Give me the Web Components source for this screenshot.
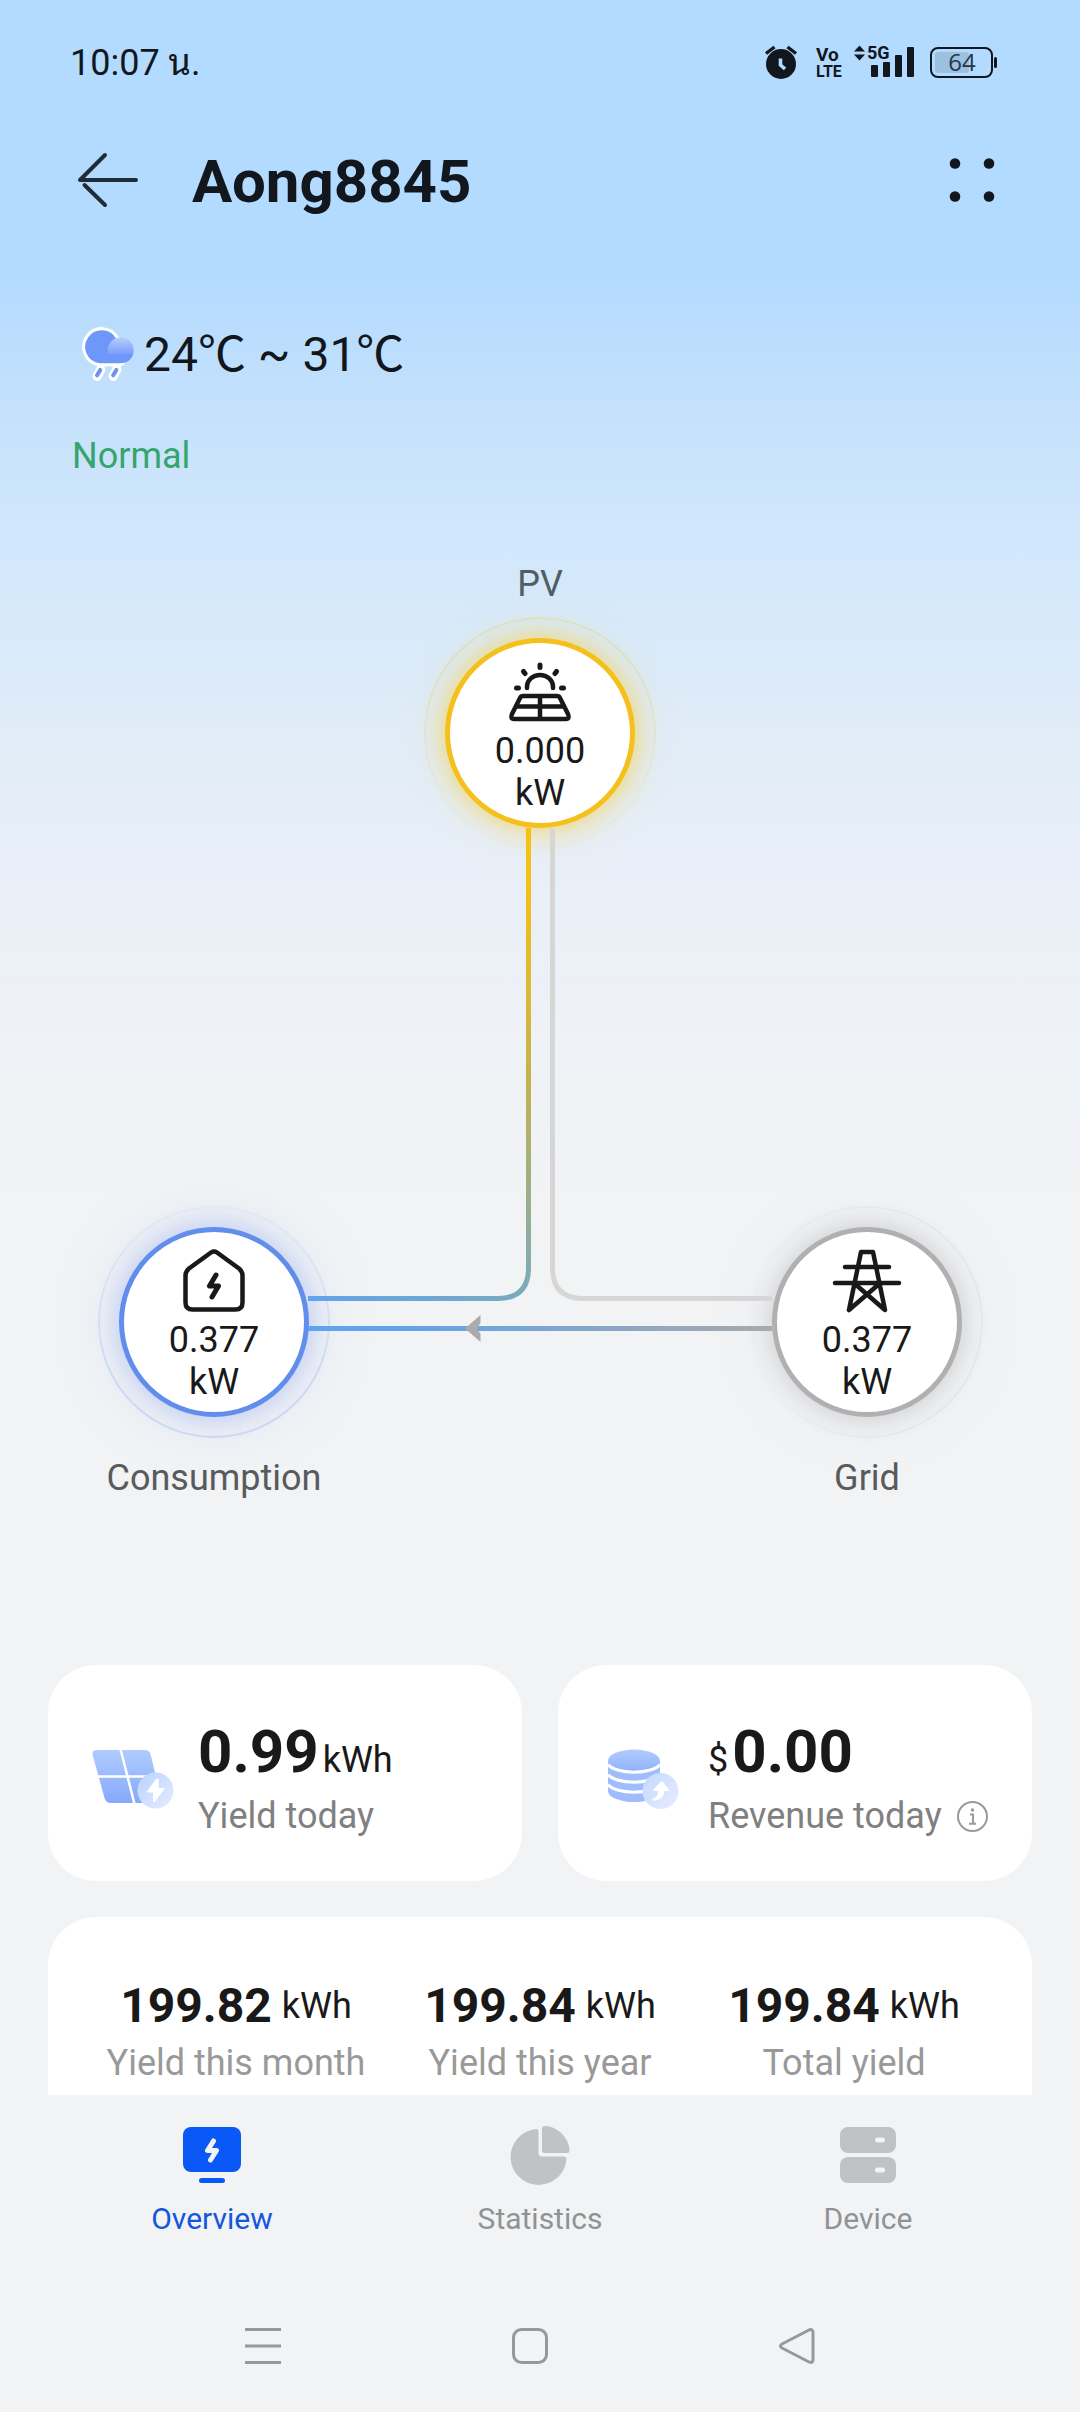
<!DOCTYPE html>
<html lang="en">
<head>
<meta charset="utf-8">
<meta name="viewport" content="width=device-width, initial-scale=1">
<title>Aong8845</title>
<style>
  body { margin: 0; background: #f1f3f5; font-family: Roboto, "Noto Sans", "Noto Sans Thai", sans-serif; color: #191919; }
</style>
</head>
<body>
<plant-app></plant-app>

<script>
const define = (name, html) => {
  const template = document.createElement('template');
  template.innerHTML = html;
  customElements.define(name, class extends HTMLElement {
    constructor() {
      super();
      this.attachShadow({ mode: 'open' }).append(template.content.cloneNode(true));
    }
  });
};

define('status-bar', `
<style>
  :host { display: flex; justify-content: space-between; align-items: center; height: 42px; padding: 42px 82px 0 70px; color: #11171d; }
  time { font-family: Roboto, "Noto Sans Thai Looped", "Noto Looped Thai", Loma, Garuda, Waree, "Noto Sans", sans-serif; font-size: 36px; line-height: 42px; }
  svg { display: block; }
</style>
<time lang="th">10:07 น.</time>
<svg width="234" height="42" viewBox="764 42 234 42" role="img" aria-label="Alarm, VoLTE, 5G signal, battery">
  <g fill="#11171d">
    <circle cx="781" cy="64" r="15"/>
    <path d="M766 53.500l8.500-6.500M796 53.500l-8.500-6.500" stroke="#11171d" stroke-width="3.400" fill="none"/>
    <path d="M780.500 58.500v6.500l4.500 4" fill="none" stroke="#b3daff" stroke-width="3.600"/>
    <g font-family="Roboto, sans-serif" font-weight="700">
      <text x="816" y="61" font-size="19">Vo</text>
      <text x="816" y="77" font-size="16">LTE</text>
      <text x="867" y="59" font-size="18">5G</text>
    </g>
    <path d="M854 51.500l5.500-6 5.500 6zM854 54.500h11l-5.500 6z"/>
    <rect x="871" y="65" width="7" height="12" rx="1"/>
    <rect x="883" y="62" width="7" height="15" rx="1"/>
    <rect x="895" y="55" width="7" height="22" rx="1"/>
    <rect x="907" y="47" width="7" height="30" rx="1"/>
    <rect x="994" y="57" width="3" height="11" rx="1.500"/>
  </g>
  <rect x="935" y="52" width="34" height="21" rx="3" fill="#9cc0e0"/>
  <rect x="931" y="48" width="61" height="29" rx="7" fill="none" stroke="#11171d" stroke-width="2"/>
  <text x="962" y="71" font-size="24" text-anchor="middle" font-family="'Open Sans'" fill="#263746">64</text>
</svg>`);

define('page-header', `
<style>
  :host { display: flex; align-items: center; height: 196px; padding: 0 78px; gap: 54px; color: #11171d; }
  h1 { margin: 0; flex: 1; font-size: 60px; line-height: 70px; font-weight: 700; }
  button { border: 0; padding: 0; background: none; display: block; width: 60px; height: 60px; }
  svg { display: block; }
</style>
<button aria-label="Back"><svg width="60" height="60" viewBox="0 0 60 60" fill="none" stroke="#202c36" stroke-width="4" stroke-linecap="round" stroke-linejoin="round"><path d="M58 28H2L27 3M6.500 33L27 53"/></svg></button>
<h1><slot></slot></h1>
<button aria-label="More"><svg width="60" height="60" viewBox="0 0 60 60" fill="#11171d"><circle cx="13" cy="11.500" r="5.300"/><circle cx="47" cy="11.500" r="5.300"/><circle cx="13" cy="44.500" r="5.300"/><circle cx="47" cy="44.500" r="5.300"/></svg></button>`);

define('weather-line', `
<style>
  :host { display: block; padding: 47px 72px 0; }
  .temp { display: flex; align-items: center; gap: 8px; padding-left: 8px; font-family: Roboto, "Noto Sans CJK SC", sans-serif; font-size: 48px; line-height: 56px; height: 56px; color: #11171d; }
  .state { margin: 52px 0 0; font-size: 36px; line-height: 42px; color: #35a56c; }
  svg { display: block; }
</style>
<div class="temp">
  <svg width="56" height="56" viewBox="1 2 54 54" aria-hidden="true">
    <defs><linearGradient id="c" x1="0" y1="0" x2="0" y2="1"><stop offset="0" stop-color="#b6cdfd"/><stop offset=".65" stop-color="#7b9ffa"/><stop offset=".66" stop-color="#6e97fa"/><stop offset="1" stop-color="#6e97fa"/></linearGradient></defs>
    <path d="M21 43l-3.500 6.500M36.500 43l-3.500 6.500" stroke="#fff" stroke-width="9" stroke-linecap="round"/>
    <path d="M20 38.500a17.500 17.500 0 1 1 17.500-25.500 14 14 0 0 1 2.500 25.500z" fill="#6e97fa" stroke="#fff" stroke-width="3" stroke-linejoin="round"/>
    <path d="M20.500 43.500l-3 5M36 43.500l-3 5" stroke="#7093f0" stroke-width="4" stroke-linecap="round"/>
    <path d="M28 29.500v-3a12.500 12.500 0 1 1 12.500 10.500z" fill="url(#c)"/>
  </svg>
  <span><slot name="temp"></slot></span>
</div>
<p class="state"><slot name="state"></slot></p>`);

define('flow-node', `
<style>
  :host { display: flex; flex-direction: column; align-items: center; gap: 40px; width: 240px; }
  :host([label-first]) { gap: 33px; }
  :host([label-first]) .label { order: -1; }
  .disc { box-sizing: border-box; width: 190px; height: 190px; border-radius: 50%; border: 5px solid var(--edge); background: #fff;
    display: flex; flex-direction: column; align-items: center; gap: 6px; padding-top: 17px; position: relative;
    box-shadow: 0 0 24px 2px var(--glow), 0 0 50px 4px var(--halo); font-size: 36px; line-height: 42px; text-align: center; }
  .disc::before { content: ""; position: absolute; inset: -26px; border: 2px solid var(--ring); border-radius: 50%;
    -webkit-mask: var(--fade); mask: var(--fade); }
  .icon { height: 64px; }
  .value { width: 100px; }
  .label { font-size: 36px; line-height: 42px; color: var(--label, #595a5b); }
</style>
<div class="disc"><div class="icon"><slot name="icon"></slot></div><div class="value"><slot></slot></div></div>
<div class="label"><slot name="label"></slot></div>`);

define('energy-flow', `
<style>
  :host { display: block; position: relative; height: 936px; margin-top: 86px; }
  flow-node { position: absolute; transform: translateX(-50%); }
  .pv { left: 50%; top: 0; --edge: #f6c01c; --glow: #f0d878; --halo: #f0e0a050; --ring: #e3dba8a0; --fade: linear-gradient(#000 20%, #0003 80%); --label: #535c65; }
  .home { left: calc(50% - 326px); top: 664px; --edge: #618eec; --glow: #c3cff2; --halo: #c8d4f680; --ring: #cbd7f4; --fade: linear-gradient(#0003, #000 80%); }
  .grid { left: calc(50% + 327px); top: 664px; --edge: #b0b0b1; --glow: #cfd0d2; --halo: #d8d9da40; --ring: #e4e6ea; --fade: linear-gradient(to right, #0002, #000 80%); }
  svg { display: block; }
  .wires { position: absolute; left: calc(50% - 240px); top: 259px; }
</style>
<flow-node class="pv" label-first>
  <svg slot="icon" width="64" height="64" viewBox="0 0 64 64" fill="none" stroke="#191919" stroke-width="4.500" stroke-linecap="round" stroke-linejoin="round" aria-hidden="true">
    <path d="M32 5v2.500M15.500 11.500l1.500 2M48.500 11.500l-1.500 2M8.500 28h2M53.500 28h2" stroke-width="5"/>
    <path d="M19 28v-1.500a13 11.500 0 0 1 26 0v1.500"/>
    <path d="M15 36h34q2 0 3 2l8 16q2 5-2 5H6q-4 0-2-5l8-16q1-2 3-2zM32 36v22M9 46.500h46"/>
  </svg>
  <span>0.000<br>kW</span>
  <span slot="label">PV</span>
</flow-node>
<flow-node class="home">
  <svg slot="icon" width="64" height="64" viewBox="0 0 64 64" fill="none" stroke="#191919" stroke-linecap="round" stroke-linejoin="round" aria-hidden="true">
    <path stroke-width="4.500" d="M29 3.500q3-2 6 0l22 16q3.500 3 3.500 7v27q0 7-7 7H10.500q-7 0-7-7v-27q0-4 3.500-7z"/>
    <path stroke-width="5" d="M34 26l-6.500 11h9l-6.500 11"/>
  </svg>
  <span>0.377<br>kW</span>
  <span slot="label">Consumption</span>
</flow-node>
<flow-node class="grid">
  <svg slot="icon" width="70" height="64" viewBox="0 0 70 64" fill="none" stroke="#191919" stroke-width="4.500" stroke-linecap="round" stroke-linejoin="round" aria-hidden="true">
    <path d="M17 61L29 3h12l12 58-30-26M53 61L41 3M17 61l30-26M13 18h44M3 34h64"/>
  </svg>
  <span>0.377<br>kW</span>
  <span slot="label">Grid</span>
</flow-node>
<svg class="wires" width="480" height="530" viewBox="300 822 480 530" fill="none" stroke-width="5" aria-hidden="true">
  <defs>
    <linearGradient id="a" gradientUnits="userSpaceOnUse" x1="528" y1="828" x2="308" y2="1300"><stop offset="0.100" stop-color="#f6c015"/><stop offset=".45" stop-color="#c0b254"/><stop offset=".8" stop-color="#7dabb8"/><stop offset="1" stop-color="#61a3ee"/></linearGradient>
    <linearGradient id="b" gradientUnits="userSpaceOnUse" x1="772" y1="0" x2="308" y2="0"><stop offset="0" stop-color="#a9a9aa"/><stop offset=".8" stop-color="#61a3ea"/><stop offset="1" stop-color="#61a3ee"/></linearGradient>
  </defs>
  <path stroke="#d6d6d6" d="M552.500 828v440q0 30 30 30.500H772"/>
  <path stroke="url(#a)" d="M528.500 828v440q0 30-30 30.500H308"/>
  <path fill="url(#b)" d="M308 1326h464v5H308z"/>
  <path fill="#ababab" d="M465 1328.500L480.500 1315v8l-3.500 5.500 3.500 5.500v8z"/>
</svg>`);

define('stat-card', `
<style>
  :host { flex: 1 1 0; min-width: 0; box-sizing: border-box; display: flex; align-items: center; gap: 22px; padding: 52px 20px 44px 44px; background: #fff; border-radius: 48px; }
  .amount { display: flex; align-items: baseline; gap: 4px; height: 70px; font-size: 36px; line-height: 42px; white-space: nowrap; }
  .caption { display: flex; align-items: center; gap: 15px; height: 42px; margin-top: 8px; font-size: 36px; line-height: 42px; color: #808080; white-space: nowrap; }
  ::slotted(strong) { font-size: 60px; line-height: 70px; font-weight: 700; }
  ::slotted(svg) { display: block; }
</style>
<slot name="icon"></slot>
<div><div class="amount"><slot></slot></div><div class="caption"><slot name="caption"></slot></div></div>`);

define('total-item', `
<style>
  :host { flex: 1 1 0; text-align: center; white-space: nowrap; }
  .amount { display: flex; justify-content: center; align-items: center; gap: 10px; font-size: 36px; line-height: 56px; }
  .caption { margin-top: 8px; font-size: 36px; line-height: 42px; color: #999; }
  ::slotted(strong) { font-size: 48px; font-weight: 700; }
</style>
<div class="amount"><slot></slot></div><div class="caption"><slot name="caption"></slot></div>`);

define('plant-summary', `
<style>
  :host { display: flex; flex-direction: column; gap: 36px; padding: 166px 48px 0; }
  .pair { display: flex; gap: 36px; }
  .totals { display: flex; padding: 61px 36px; background: #fff; border-radius: 48px; }
  .info { border: 0; padding: 0; background: none; display: block; width: 31px; height: 36px; }
  .info svg { display: block; }
</style>
<div class="pair">
  <stat-card>
    <svg slot="icon" width="84" height="64" viewBox="0 0 84 64" aria-hidden="true">
      <defs>
        <linearGradient id="p" x1="0" y1="0" x2="0" y2="1"><stop offset="0" stop-color="#b0ccfd"/><stop offset="1" stop-color="#86a8fc"/></linearGradient>
        <linearGradient id="q" x1="0" y1="0" x2="1" y2="1"><stop offset="0" stop-color="#b9d2fd"/><stop offset="1" stop-color="#e6edff"/></linearGradient>
      </defs>
      <path d="M5 5h48q4 0 5.500 4l12 49H19q-5 0-6.500-5L.500 9.500Q0 5 5 5z" fill="url(#p)"/>
      <path d="M28.500 4l14 55M5 31.500h60" stroke="#fff" stroke-width="2.500"/>
      <path d="M66 28h18v36H52z" fill="#fff"/>
      <circle cx="63.500" cy="45.500" r="18" fill="url(#q)"/>
      <path d="M64 34L55 46.500q-.5 1 .5 1h5.500L61 56q.5 1.500 1.800 1L72 44.500q.5-1.500-1-1.500h-4.500L67 35q-1-2.500-3-1z" fill="#fff"/>
    </svg>
    <strong>0.99</strong><span>kWh</span>
    <span slot="caption">Yield today</span>
  </stat-card>
  <stat-card>
    <svg slot="icon" width="84" height="64" viewBox="0 0 84 64" aria-hidden="true">
      <defs>
        <linearGradient id="r" x1="0" y1="0" x2="0" y2="1"><stop offset="0" stop-color="#b0ccfd"/><stop offset="1" stop-color="#8fb0fc"/></linearGradient>
        <linearGradient id="s" x1="0" y1="0" x2="1" y2="1"><stop offset="0" stop-color="#c3d8fd"/><stop offset="1" stop-color="#e9edff"/></linearGradient>
      </defs>
      <path d="M6 16h52v30a26 11 0 0 1-52 0z" fill="#9fbcfd"/>
      <ellipse cx="32" cy="16" rx="26" ry="11.500" fill="url(#r)"/>
      <path d="M6 19.500a27 10.500 0 0 0 52 0M6 29.500a27 10.500 0 0 0 52 0M6 39.500a27 10.500 0 0 0 52 0" fill="none" stroke="#fff" stroke-width="3"/>
      <circle cx="58.500" cy="46" r="18" fill="url(#s)"/>
      <path d="M59 36.500l-7.500 8q-.5 1.500 1 1.500h4q-.5 6-6 8-.5 1.800 1 1.700Q62 55 62.500 46H66q1.500-.3.800-1.500L60.500 36.500z" fill="#fff"/>
    </svg>
    <span>$</span><strong>0.00</strong>
    <span slot="caption">Revenue today</span>
    <button slot="caption" class="info" aria-label="About revenue"><svg width="31" height="31" viewBox="0 0 31 31" fill="none" stroke="#999" stroke-width="2"><circle cx="15.500" cy="15.500" r="14.500"/><path d="M13 13.500h3v9M12 22.800h7"/><circle cx="15.500" cy="9" r="1" fill="#999" stroke-width="1.500"/></svg></button>
  </stat-card>
</div>
<div class="totals">
  <total-item><strong>199.82</strong><span>kWh</span><span slot="caption">Yield this month</span></total-item>
  <total-item><strong>199.84</strong><span>kWh</span><span slot="caption">Yield this year</span></total-item>
  <total-item><strong>199.84</strong><span>kWh</span><span slot="caption">Total yield</span></total-item>
</div>`);

define('tab-bar', `
<style>
  :host { display: block; padding: 30px 48px 0; }
  nav { display: flex; }
  a { flex: 1 1 0; display: flex; flex-direction: column; align-items: center; gap: 16px; font-size: 30px; line-height: 36px; color: #919293; text-decoration: none; }
  a[aria-current] { color: #1456dd; }
  svg { display: block; }
</style>
<nav aria-label="Main">
  <a href="#overview" aria-current="page">
    <svg width="60" height="60" viewBox="0 0 60 60" aria-hidden="true"><rect x="1" y="2" width="58" height="45" rx="8" fill="#0a59f7"/><rect x="17" y="53" width="26" height="5" rx="2.500" fill="#0a59f7"/><path d="M31.500 16l-6 9.500h9l-6 9.500" fill="none" stroke="#f1f3f5" stroke-width="5" stroke-linecap="round" stroke-linejoin="round"/></svg>
    Overview</a>
  <a href="#statistics">
    <svg width="60" height="60" viewBox="0 0 60 60" fill="#c1c2c4" aria-hidden="true"><path d="M26 4q2.500 0 2.500 2.500V28q0 3.500 3.500 3.500h22.500q2 0 2 2.500A28 28 0 1 1 26 4z"/><path d="M32 3.500Q32 1 34.500 1A26 26 0 0 1 59.500 25.500Q59.500 28 57 28H34q-2 0-2-2z"/></svg>
    Statistics</a>
  <a href="#device">
    <svg width="60" height="60" viewBox="0 0 60 60" aria-hidden="true"><g fill="#c1c2c4"><rect x="2" y="2" width="56" height="26" rx="8"/><rect x="2" y="32" width="56" height="26" rx="8"/></g><g fill="#f1f3f5"><rect x="37" y="12.500" width="10" height="5" rx="2.500"/><rect x="37" y="42.500" width="10" height="5" rx="2.500"/></g></svg>
    Device</a>
</nav>`);

define('system-nav', `
<style>
  :host { display: flex; justify-content: center; gap: 231px; padding: 91px 20px 48px 0; }
  button { border: 0; padding: 0; background: none; width: 36px; height: 36px; }
  svg { display: block; fill: none; stroke: #97989a; stroke-width: 3; stroke-linejoin: round; }
</style>
<button aria-label="Recent apps"><svg width="36" height="36" viewBox="0 0 36 36"><path d="M0 1.500h36M0 18h36M0 34.500h36"/></svg></button>
<button aria-label="Home"><svg width="36" height="36" viewBox="0 0 36 36"><rect x="1.500" y="1.500" width="33" height="33" rx="8"/></svg></button>
<button aria-label="Back"><svg width="36" height="36" viewBox="0 0 36 36"><path d="M29 2.500q4.500-2.500 5 1.500v28q-.5 4-5 1.500L3 20q-3-2 0-4z"/></svg></button>`);

define('plant-app', `
<style>
  :host { display: flex; flex-direction: column; height: 100vh;
    background: linear-gradient(#b3daff 270px, #cbe4fb 470px, #d3e8fc 560px, #e0ecf8 730px, #e9eff8 870px, #eff2f6 1050px, #f1f3f5 1200px); }
  main { flex: 1 1 0; min-height: 0; overflow: hidden; }
</style>
<status-bar></status-bar>
<page-header>Aong8845</page-header>
<main>
  <weather-line><span slot="temp">24℃ ~ 31℃</span><span slot="state">Normal</span></weather-line>
  <energy-flow></energy-flow>
  <plant-summary></plant-summary>
</main>
<tab-bar></tab-bar>
<system-nav></system-nav>`);
</script>
</body>
</html>
